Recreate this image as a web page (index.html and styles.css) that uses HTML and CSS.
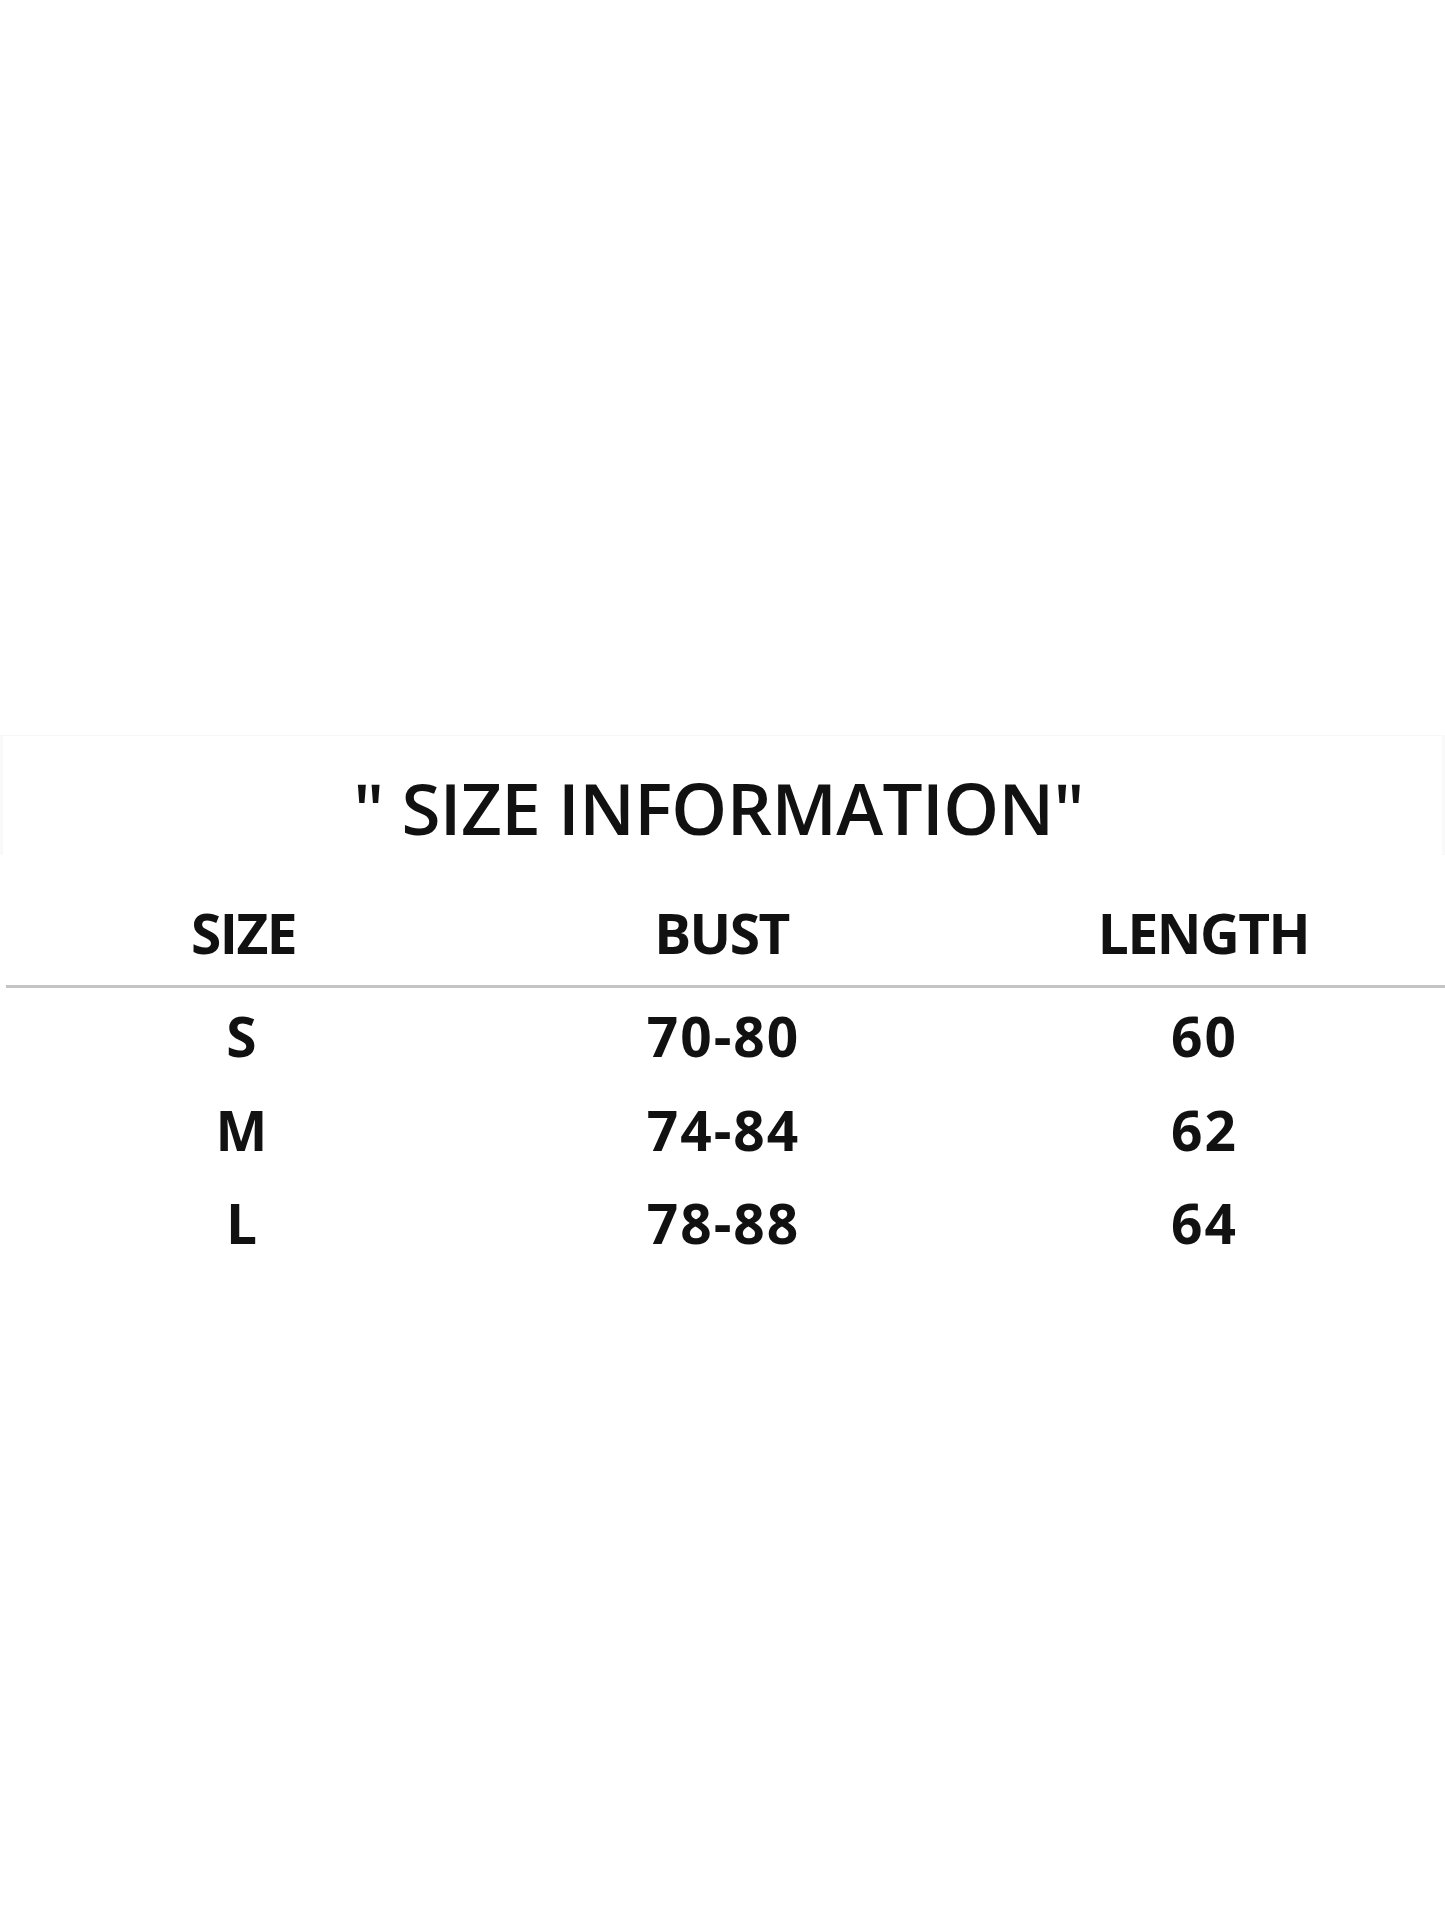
FILE: index.html
```html
<!DOCTYPE html>
<html lang="en">
<head>
<meta charset="utf-8">
<title>Size Information</title>
<link rel="stylesheet" href="styles.css">
</head>
<body>
<div class="page">
  <div class="title-band">
    <h1 class="title">" SIZE INFORMATION"</h1>
  </div>
  <div class="table">
    <div class="row head">
      <div class="cell">SIZE</div>
      <div class="cell">BUST</div>
      <div class="cell">LENGTH</div>
    </div>
    <div class="row">
      <div class="cell">S</div>
      <div class="cell">70-80</div>
      <div class="cell">60</div>
    </div>
    <div class="row">
      <div class="cell">M</div>
      <div class="cell">74-84</div>
      <div class="cell">62</div>
    </div>
    <div class="row">
      <div class="cell">L</div>
      <div class="cell">78-88</div>
      <div class="cell">64</div>
    </div>
  </div>
</div>
</body>
</html>
```

FILE: styles.css
```css
html, body {
  margin: 0;
  padding: 0;
  background: #ffffff;
}

.page {
  width: 1445px;
  height: 1927px;
  padding-top: 735px;
  box-sizing: border-box;
  font-family: "Open Sans", "Noto Sans", "Liberation Sans", sans-serif;
  color: #111111;
}

.title-band {
  height: 120px;
  border-top: 1px solid #f7f7f7;
  border-left: 3px solid #f9f9f9;
  border-right: 3px solid #f9f9f9;
  box-sizing: border-box;
  display: flex;
  align-items: center;
  justify-content: center;
}

.title {
  margin: 0;
  font-size: 71px;
  font-weight: 600;
  line-height: 100px;
  letter-spacing: -0.6px;
  color: #111111;
  position: relative;
  top: 12px;
  left: -4px;
}

.table {
  margin-top: 27px;
}

.row {
  display: grid;
  grid-template-columns: 481px 481px 481px;
  padding-left: 2px;
  height: 93.5px;
  align-items: center;
}

.row.head {
  height: 106px;
  margin-left: 6px;
  padding-left: 0;
  grid-template-columns: 475px 481px 483px;
  border-bottom: 3px solid #c4c4c4;
  margin-bottom: 1px;
  padding-bottom: 3px;
  box-sizing: border-box;
}

.cell {
  text-align: center;
  font-size: 55px;
  font-weight: 700;
  line-height: 1;
  letter-spacing: 2px;
}

.row.head .cell {
  font-size: 55px;
  letter-spacing: -1.5px;
}
```
